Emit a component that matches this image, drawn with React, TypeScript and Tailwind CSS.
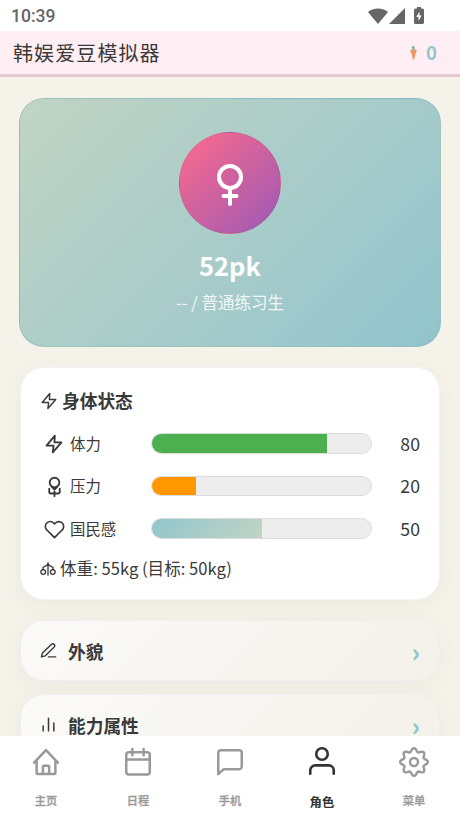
import type { ReactNode } from "react";
import { clsx } from "clsx";

type IconProps = {
  className?: string;
  strokeWidth?: number;
  children?: ReactNode;
};

function Icon({ className, strokeWidth = 2, children }: IconProps) {
  return (
    <svg
      viewBox="0 0 24 24"
      fill="none"
      stroke="currentColor"
      strokeWidth={strokeWidth}
      strokeLinecap="round"
      strokeLinejoin="round"
      className={clsx("shrink-0", className)}
    >
      {children}
    </svg>
  );
}

function BoltIcon(props: IconProps) {
  return (
    <Icon {...props}>
      <path d="M13 2 3 14h8.500l-1 8L21 10h-8.500z" />
    </Icon>
  );
}

function StressIcon(props: IconProps) {
  return (
    <Icon {...props}>
      <circle cx="12" cy="7.500" r="5.500" />
      <path d="m9 12.500 3 3 3-3" />
      <path d="M6 14.500V18a2 2 0 0 0 2 2h8a2 2 0 0 0 2-2v-3.500M12 17.500V23" />
    </Icon>
  );
}

function HeartIcon(props: IconProps) {
  return (
    <Icon {...props}>
      <path d="M20.84 4.610a5.500 5.500 0 0 0-7.780 0L12 5.670l-1.060-1.060a5.500 5.500 0 0 0-7.780 7.780l1.060 1.060L12 21.230l7.780-7.780 1.060-1.060a5.500 5.500 0 0 0 0-7.780z" />
    </Icon>
  );
}

function ScaleIcon(props: IconProps) {
  return (
    <Icon {...props}>
      <path d="M12 2.500V21M4.500 13V9.500Q12 6.500 12 3q0 3.500 7.500 6.500V13" />
      <circle cx="4.800" cy="16.500" r="3.500" />
      <circle cx="19.200" cy="16.500" r="3.500" />
    </Icon>
  );
}

function PenIcon(props: IconProps) {
  return (
    <Icon {...props}>
      <path d="M12 21h10" />
      <path d="M16 3.500a2.600 2.600 0 0 1 4 3.700L7.500 19.500 2 21l1.500-5.500z" />
    </Icon>
  );
}

function BarsIcon(props: IconProps) {
  return (
    <Icon {...props}>
      <path d="M4.500 21v-7M12 21V3M19.500 21V10" />
    </Icon>
  );
}

// eight rounded teeth around the hub
const gearPoints = Array.from({ length: 96 }, (_, i) => {
  const angle = (i / 96) * Math.PI * 2;
  const radius = 9.7 + 1.4 * Math.cos(8 * angle);
  return `${(12 + radius * Math.cos(angle)).toFixed(2)},${(12 + radius * Math.sin(angle)).toFixed(2)}`;
}).join(" ");

function GearIcon(props: IconProps) {
  return (
    <Icon {...props}>
      <polygon points={gearPoints} />
      <circle cx="12" cy="12" r="3.200" />
    </Icon>
  );
}

function StatusBar() {
  return (
    <div className="flex h-[31px] shrink-0 items-center justify-between bg-white pl-[11px] pr-9 text-[#666666]">
      <span className="pt-px font-['Roboto'] text-[17.500px] font-medium leading-[30px]">10:39</span>
      <div className="flex items-center">
        <svg viewBox="0 0 20 16" className="h-4 w-5" fill="currentColor">
          <path d="M0 4C5-.8 15-.8 20 4L10 16z" />
        </svg>
        <svg viewBox="0 0 16 16" className="ml-px h-4 w-4" fill="currentColor">
          <path d="M16 0v16H0z" />
        </svg>
        <svg viewBox="0 0 10 17" className="-mt-px ml-[9px] h-[17px] w-2.5">
          <path
            d="M3 0h4v1.500h1.500Q10 1.500 10 3v12.500Q10 17 8.500 17h-7Q0 17 0 15.500V3q0-1.500 1.500-1.500H3z"
            fill="currentColor"
          />
          <path d="M5.500 4.500 2.300 10h2.200v4L7.700 8.500H5.500z" fill="white" />
        </svg>
      </div>
    </div>
  );
}

function Header() {
  return (
    <header className="flex h-[46px] shrink-0 items-center justify-between border-b-[3px] border-[#e6cad1] bg-[#ffeff4] pl-[13px] pr-[23px]">
      <h1 className="pt-px text-[20px] font-normal leading-none tracking-[1.1px]">韩娱爱豆模拟器</h1>
      <div className="flex items-center gap-[9px] text-[#94c5cf]">
        <svg viewBox="0 0 7 14" className="h-3.5 w-[7px]">
          <path d="M2.200 0h1.800l.8 1.500L4.500 4h-2L1.700 1.500z" fill="#83bd9b" />
          <path d="M1 3.500h5l.8 1.500-1.600 4-1 4.500H3L2 9 .3 5z" fill="#ee9564" />
        </svg>
        <span className="text-[18.500px] font-bold leading-none">0</span>
      </div>
    </header>
  );
}

function ProfileCard() {
  return (
    <section className="-mx-px flex h-[249px] flex-col items-center rounded-[25px] border border-[#5fa5aa]/30 bg-[linear-gradient(135deg,#c1d4c4_0%,#92c4cd_100%)] pt-[33px] text-white">
      <div className="flex h-[102px] w-[102px] shrink-0 items-center justify-center rounded-full border border-black/5 bg-[linear-gradient(135deg,#ff6b8a_0%,#9b59b6_100%)]">
        <svg
          viewBox="0 0 28 44"
          className="mt-[3px] h-11 w-7"
          fill="none"
          stroke="currentColor"
          strokeWidth="4"
          strokeLinecap="round"
        >
          <circle cx="14" cy="14" r="11" />
          <path d="M14 25v16M7.500 33h13" />
        </svg>
      </div>
      <h2 className="mt-[11px] text-[25.500px] font-bold leading-[40px]">52pk</h2>
      <p className="mt-[5px] text-[16.500px] leading-6 text-white/85">-- / 普通练习生</p>
    </section>
  );
}

type StatRowProps = {
  icon: ReactNode;
  label: string;
  value: number;
  barClassName: string;
};

function StatRow({ icon, label, value, barClassName }: StatRowProps) {
  return (
    <div className="flex h-[42.500px] items-center">
      <div className="flex w-[111px] items-center pl-[3px]">
        <span className="flex w-[22px] justify-center pt-0.5">{icon}</span>
        <span className="ml-[5px] text-[15.400px]">{label}</span>
      </div>
      <div className="h-[20.500px] w-[221px] overflow-hidden rounded-full border border-[#dcdcdc] bg-[#ededed]">
        <div className={clsx("h-full", barClassName)} style={{ width: `${value}%` }} />
      </div>
      <span className="flex-1 text-right text-[17.700px]">{value}</span>
    </div>
  );
}

function BodyCard() {
  return (
    <section className="mt-5 h-[233px] rounded-[24px] border border-[#f4f4f4] bg-white pl-[19px] pr-[19px] pt-[18px] shadow-[0_4px_22px_rgba(80,75,50,0.05)]">
      <h3 className="flex h-7 items-center text-[17.700px] font-bold">
        <BoltIcon className="mr-1 mt-px h-[18px] w-[18px]" strokeWidth={1.9} />
        身体状态
      </h3>
      <div className="mt-2">
        <StatRow
          icon={<BoltIcon className="h-5 w-5" strokeWidth={2.2} />}
          label="体力"
          value={80}
          barClassName="bg-[#4caf50]"
        />
        <StatRow
          icon={<StressIcon className="h-[21px] w-[21px]" strokeWidth={2.1} />}
          label="压力"
          value={20}
          barClassName="bg-[#ff9800]"
        />
        <StatRow
          icon={<HeartIcon className="h-[21px] w-[21px]" strokeWidth={1.9} />}
          label="国民感"
          value={50}
          barClassName="bg-[linear-gradient(135deg,#92c5cd_0%,#c1d4c4_100%)]"
        />
      </div>
      <p className="mt-[5px] flex h-7 items-center text-[16.600px]">
        <ScaleIcon className="mr-1 h-4 w-4" />
        体重: 55kg (目标: 50kg)
      </p>
    </section>
  );
}

function FoldCard({ icon, title, className }: { icon: ReactNode; title: string; className?: string }) {
  return (
    <section
      className={clsx(
        "flex h-[61px] shrink-0 items-center rounded-[24px] border border-[#efefef] bg-[linear-gradient(135deg,#fafaf8_0%,#f4f1ea_100%)] pl-[19px] pr-[19px] shadow-[0_4px_22px_rgba(80,75,50,0.05)]",
        className
      )}
    >
      {icon}
      <h3 className="ml-[11px] flex-1 pt-px text-[17.700px] font-bold">{title}</h3>
      <span className="pt-0.5 text-[25px] font-black leading-none text-[#92c5cd]">›</span>
    </section>
  );
}

type NavItemProps = {
  icon: ReactNode;
  label: string;
  active?: boolean;
};

function NavItem({ icon, label, active = false }: NavItemProps) {
  return (
    <button
      type="button"
      className={clsx(
        "flex flex-1 flex-col items-center pt-2.5 font-medium",
        active ? "text-[#333333]" : "text-[#999999]"
      )}
    >
      <span className="flex h-8 items-center">{icon}</span>
      <span
        className={clsx(
          "leading-4",
          active ? "mt-4 text-[12.400px] font-bold" : "mt-3.5 text-[11.200px] [-webkit-text-stroke:0.3px]"
        )}
      >
        {label}
      </span>
    </button>
  );
}

function BottomNav() {
  return (
    <nav className="flex h-[82px] shrink-0 bg-white">
      <NavItem
        label="主页"
        icon={
          <Icon className="h-[30px] w-[30px]">
            <path d="m2.500 12.500 9.500-10 9.500 10M4.500 11v9.500a1 1 0 0 0 1 1h13a1 1 0 0 0 1-1V11" />
            <path d="M9.500 21v-5a1 1 0 0 1 1-1h3a1 1 0 0 1 1 1v5" />
          </Icon>
        }
      />
      <NavItem
        label="日程"
        icon={
          <Icon className="h-[30px] w-[30px]">
            <rect x="2.600" y="4.200" width="18.800" height="17.800" rx="2" />
            <path d="M7.500 1.500v5M16.500 1.500v5M2.500 10h19" />
          </Icon>
        }
      />
      <NavItem
        label="手机"
        icon={
          <Icon className="h-[30px] w-[30px]">
            <path d="M21.400 15.700a2 2 0 0 1-2 2H7l-4.400 4V4.500a2 2 0 0 1 2-2h14.800a2 2 0 0 1 2 2z" />
          </Icon>
        }
      />
      <NavItem
        label="角色"
        active
        icon={
          <Icon className="h-[30px] w-[30px]" strokeWidth={2.1}>
            <circle cx="12" cy="5.600" r="4.600" />
            <path d="M2.600 21.400V18.700a4 4 0 0 1 4-4h10.800a4 4 0 0 1 4 4v2.700" />
          </Icon>
        }
      />
      <NavItem label="菜单" icon={<GearIcon className="h-[30px] w-[30px]" strokeWidth={1.9} />} />
    </nav>
  );
}

export default function App() {
  return (
    <div className="flex h-screen flex-col overflow-hidden bg-[#f5f2ea] font-['Noto_Sans_CJK_SC',sans-serif] text-[#393939]">
      <StatusBar />
      <Header />
      <main className="min-h-0 flex-1 overflow-hidden px-5 pt-[21px]">
        <ProfileCard />
        <BodyCard />
        <FoldCard
          className="mt-5"
          title="外貌"
          icon={<PenIcon className="h-[17px] w-[17px]" strokeWidth={2} />}
        />
        <FoldCard
          className="mt-[13px]"
          title="能力属性"
          icon={<BarsIcon className="h-[17px] w-[17px]" strokeWidth={2.1} />}
        />
      </main>
      <BottomNav />
    </div>
  );
}
